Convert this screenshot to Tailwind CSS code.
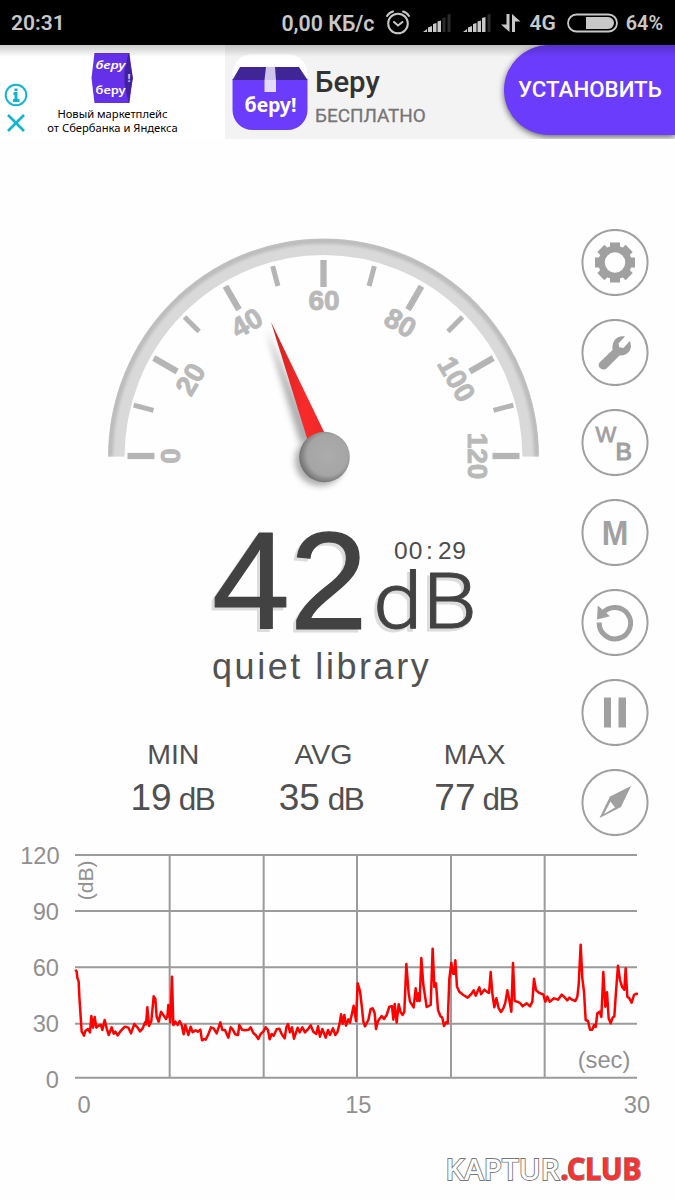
<!DOCTYPE html>
<html lang="ru">
<head>
  <meta charset="UTF-8">
  <meta name="viewport" content="width=device-width, initial-scale=1.0">
  <title>Sound Meter</title>
  <script src="https://cdn.jsdelivr.net/npm/@tailwindcss/browser@4"></script>
</head>
<body class="w-[675px] h-[1200px] overflow-hidden bg-[#fefefe] flex flex-col font-['Liberation_Sans',sans-serif]">

  <!-- Status bar -->
  <header class="h-[45px] shrink-0 bg-black text-[#c8c8c8] flex items-center pl-[11px] pr-3 font-['Roboto',sans-serif] font-semibold text-[21px]">
    <span class="mr-auto pt-[2px]">20:31</span>
    <span class="mr-[11px] pt-[2px] text-[21.3px]">0,00 КБ/с</span>
    <svg class="w-[26px] h-[26px] mr-[12px]" viewBox="0 0 26 26" fill="none" stroke="#c8c8c8" stroke-width="2" stroke-linecap="round">
      <circle cx="13" cy="13.500" r="9.8"/>
      <path d="M9 12l4 3.500 4.500-3.500M2 6Q4 2.500 8 1.500M24 6Q22 2.500 18 1.500"/>
    </svg>
    <svg class="w-[28px] h-[20px] mr-[12px]" viewBox="0 0 28 20" fill="#c8c8c8">
      <path d="M0 19l4-3v3zM5 14.500l4-1.500v6H5zM10 11l3.500-1v9H10zM14.500 8.500l3.500-1V19h-3.500z"/>
      <path d="M19.500 5l3-1v15h-3zM24.500 2l3-1.500V19h-3z" fill="#2c2c2c"/>
    </svg>
    <svg class="w-[28px] h-[20px] mr-[10px]" viewBox="0 0 28 20" fill="#c8c8c8">
      <path d="M0 19l4-3v3zM5 14.500l4-1.500v6H5zM10 11l3.500-1v9H10zM14.500 8.500l3.500-1V19h-3.500zM19 5l3.500-1v15H19z"/>
      <path d="M24.500 2l3-1.500V19h-3z" fill="#2c2c2c"/>
    </svg>
    <svg class="w-[20px] h-[20px] mr-[8px]" viewBox="0 0 20 20" fill="#c8c8c8">
      <path d="M5.500 1h3v18L0 11.500h5.500zM11 19V1l8.500 7.500H14V19z"/>
    </svg>
    <span class="mr-[11px] pt-[2px]">4G</span>
    <svg class="w-[51px] h-[20px] mr-2" viewBox="0 0 51 20">
      <rect x="1" y="1.500" width="49" height="17" rx="8.500" fill="none" stroke="#c8c8c8" stroke-width="1.800"/>
      <path d="M19 4h22a6 6 0 0 1 0 12H19z" fill="#c8c8c8"/>
    </svg>
    <span class="pt-[2px] text-[19.8px]">64%</span>
  </header>

  <!-- Ad banner -->
  <section class="relative h-[94px] shrink-0 flex">
    <div class="w-[225px] h-full bg-white flex">
      <div class="w-[36px] pt-[38px] pl-1 flex flex-col gap-[6px]">
        <svg class="w-[24px] h-[24px]" viewBox="0 0 24 24" fill="none" stroke="#12b5d0" stroke-width="2">
          <circle cx="12" cy="12" r="10.300"/>
          <path d="M9.500 10.500H12V17M9 17.500h6.500M12 5.500v2.500" stroke-width="3"/>
        </svg>
        <svg class="w-[24px] h-[20px]" viewBox="0 0 24 20" stroke="#12b5d0" stroke-width="2.600">
          <path d="M4 2l16 16M20 2L4 18"/>
        </svg>
      </div>
      <div class="w-[153px] pt-[7px] flex flex-col items-center">
        <svg class="w-[44px] h-[52px]" viewBox="1.500 0 44 52">
          <path d="M5 1h35l3 25-3 25H5L2 26z" fill="#6430e8"/>
          <path d="M39 1l4.500 25L39 51l-4-20V20z" fill="#42219c"/>
          <text x="21" y="17" text-anchor="middle" textLength="30" lengthAdjust="spacingAndGlyphs" font-family="Noto Sans" font-weight="600" font-style="italic" font-size="10" fill="#fff">беру</text>
          <text x="21" y="42" text-anchor="middle" textLength="30" lengthAdjust="spacingAndGlyphs" font-family="Noto Sans" font-weight="600" font-size="10" fill="#fff">беру</text>
          <text x="38" y="30" font-family="Noto Sans" font-weight="700" font-size="11" fill="#d8ccf8">!</text>
        </svg>
        <p class="mt-[3px] font-['Noto_Sans',sans-serif] text-[11.2px] leading-[13.5px] text-center text-black whitespace-nowrap">Новый маркетплейс<br>от Сбербанка и Яндекса</p>
      </div>
    </div>
    <div class="flex-1 bg-[#f3f3f3] flex overflow-hidden font-['Roboto',sans-serif]">
      <svg class="w-[76px] h-[76px] mt-[9px] ml-[7px]" viewBox="0 0 76 76">
        <rect x=".5" width="75" height="75" rx="20" fill="#fff"/>
        <path d="M.5 25h75v31a20 20 0 0 1-20 20h-35a20 20 0 0 1-20-20z" fill="#6b3cfb"/>
        <path d="M8 13h59l8.500 13H.5z" fill="#3f2596"/>
        <path d="M34 13h9l1 13H32.500z" fill="#cfc4ec"/>
        <path d="M32.500 26H44v12H32.500z" fill="#e4dcff"/>
        <text x="38.500" y="58" text-anchor="middle" textLength="52" lengthAdjust="spacingAndGlyphs" font-family="Noto Sans" font-weight="700" font-size="19" fill="#fff">беру!</text>
      </svg>
      <div class="ml-[7px] pt-[20px] w-[189px]">
        <p class="text-[29.3px] leading-[34px] font-medium text-[#333]">Беру</p>
        <p class="text-[18.9px] leading-[33px] text-[#757575] [-webkit-text-stroke:0.3px_#757575]">БЕСПЛАТНО</p>
      </div>
      <div class="w-[171px] h-[90px] rounded-l-full bg-[#6b3cfb] shadow-[0_2px_6px_rgba(0,0,0,.6)] pl-[14px] flex items-center text-white text-[22.3px] font-medium">УСТАНОВИТЬ</div>
    </div>
    <div class="absolute inset-x-0 top-0 h-[12px] bg-linear-to-b from-black/20 to-transparent"></div>
  </section>

  <main class="flex h-[701px] shrink-0">
    <div class="w-[570px]">
      <!-- Gauge, origin at the centre of the arc -->
      <svg class="block w-[570px] h-[356px]" viewBox="-323.500 -317 570 356" font-family="Liberation Sans, sans-serif">
        <defs>
          <linearGradient id="needle" x1="0" y1="0" x2="1" y2="0">
            <stop offset="0" stop-color="#cf2020"/>
            <stop offset=".6" stop-color="#f82a2a"/>
            <stop offset="1" stop-color="#ee2828"/>
          </linearGradient>
          <radialGradient id="hub" cx=".56" cy=".46" r=".56">
            <stop offset="0" stop-color="#acacac"/>
            <stop offset=".72" stop-color="#a5a5a5"/>
            <stop offset="1" stop-color="#727272"/>
          </radialGradient>
          <filter id="soft" x="-50%" y="-50%" width="200%" height="200%"><feGaussianBlur stdDeviation="3"/></filter>
          <filter id="edge" x="-10%" y="-10%" width="120%" height="120%"><feGaussianBlur stdDeviation="1.500"/></filter>
          <clipPath id="ring"><path d="M-215.500.7A215.500 218.300 0 0 1 215.500.7z"/></clipPath>
        </defs>
        <g fill="none" clip-path="url(#ring)">
          <path d="M-207.200.7A207.200 210 0 0 1 207.200.7" stroke="#d9d9d9" stroke-width="16.600"/>
          <path d="M-213.500.7A213.500 216 0 0 1 213.500.7" stroke="#bcbcbc" stroke-width="6" filter="url(#edge)"/>
        </g>
        <g id="ticks" stroke="#b5b5b5"></g>
        <g fill="#b9b9b9" stroke="#b9b9b9" stroke-width=".9" font-weight="700" font-size="28" text-anchor="middle">
          <text y="-144" transform="rotate(-90)">0</text>
          <text y="-144" transform="rotate(-60)">20</text>
          <text y="-144" transform="rotate(-30)">40</text>
          <text x=".5" y="-146">60</text>
          <text y="-144" transform="rotate(30)">80</text>
          <text y="-144" transform="rotate(60)">100</text>
          <text y="-144" transform="rotate(90)">120</text>
        </g>
        <path d="M-57-126L-24-14-8-14z" fill="#777" opacity=".6" filter="url(#soft)"/>
        <circle cx="-3.500" cy="5" r="25" fill="#777" opacity=".6" filter="url(#soft)"/>
        <path d="M-52.500-134L-15-13 3-19z" fill="url(#needle)"/>
        <circle cx="1" cy="1" r="25.300" fill="url(#hub)"/>
      </svg>

      <!-- Current level -->
      <svg class="block w-[570px] h-[205px]" viewBox="0 495 570 205" font-family="Liberation Sans, sans-serif" fill="#424242">
        <g class="drop-shadow-[-3px_3px_0_#dcdcdc]" stroke="#424242" stroke-linejoin="round">
          <text x="212" y="628.500" font-size="140" stroke-width="1.200" letter-spacing="0">42</text>
          <text x="373" y="628" font-size="78" font-family="Roboto" font-weight="300" stroke-width=".8" textLength="104" lengthAdjust="spacingAndGlyphs">dB</text>
        </g>
        <g font-size="24.500" fill="#4c4c4c">
          <text x="394" y="559" letter-spacing="1">00</text>
          <text x="426" y="559">:</text>
          <text x="438" y="559" letter-spacing=".5">29</text>
        </g>
        <text x="212" y="679" font-size="36" fill="#525252" letter-spacing="2.550">quiet library</text>
      </svg>

      <!-- Min / avg / max -->
      <div class="ml-[98px] w-[452px] mt-[36px] grid grid-cols-3 text-center text-[#505050]">
        <div>
          <p class="text-[28.5px] leading-[36px]">MIN</p>
          <p class="text-[37px] leading-[51px] pr-[2px]">19<span class="ml-[7px] text-[31.5px] tracking-[-1.5px]">dB</span></p>
        </div>
        <div class="pr-[1px]">
          <p class="text-[28.5px] leading-[36px]">AVG</p>
          <p class="pr-[5px] text-[37px] leading-[51px]">35<span class="ml-[8px] text-[31.5px] tracking-[-1.5px]">dB</span></p>
        </div>
        <div>
          <p class="text-[28.5px] leading-[36px]">MAX</p>
          <p class="pl-[3px] text-[37px] leading-[51px]">77<span class="ml-[7px] text-[31.5px] tracking-[-1.5px]">dB</span></p>
        </div>
      </div>
    </div>

    <!-- Side buttons -->
    <nav class="pt-[90px] pl-[11px] flex flex-col gap-[23px]">
      <button class="block w-[68px] h-[67px]">
        <svg viewBox="0 0 68 67" fill="#a0a0a0">
          <circle cx="34" cy="33.500" r="32.600" fill="none" stroke="#a0a0a0" stroke-width="2"/>
          <circle cx="34" cy="33.500" r="13.500" fill="none" stroke="#a0a0a0" stroke-width="6.500"/>
          <g id="teeth"></g>
        </svg>
      </button>
      <button class="block w-[68px] h-[67px]">
        <svg viewBox="-.5 0 68 67" fill="#a0a0a0">
          <circle cx="33.500" cy="33.500" r="32.600" fill="none" stroke="#a0a0a0" stroke-width="2"/>
          <path d="M18 43.500L31 31C30 22 35.500 16 43.500 17.500L37 24.500 37.800 28.200 42 29 48.200 22C52 29.500 47 37 38 36.500L25 49.500C20.500 52.500 15 47.500 18 43.500z"/>
        </svg>
      </button>
      <button class="block w-[68px] h-[67px]">
        <svg viewBox="-.5 0 68 67" fill="#a0a0a0" font-family="Liberation Sans, sans-serif">
          <circle cx="33.500" cy="33.500" r="32.600" fill="none" stroke="#a0a0a0" stroke-width="2"/>
          <text x="14" y="33" font-size="22" stroke="#a0a0a0" stroke-width=".8">W</text>
          <text x="34" y="51" font-size="24.500" stroke="#a0a0a0" stroke-width="1.200">B</text>
        </svg>
      </button>
      <button class="block w-[68px] h-[67px]">
        <svg viewBox="-.5 0 68 67" fill="#a0a0a0" font-family="Liberation Sans, sans-serif">
          <circle cx="33.500" cy="33.500" r="32.600" fill="none" stroke="#a0a0a0" stroke-width="2"/>
          <g transform="translate(33.500 46) scale(.9 1)">
            <text text-anchor="middle" font-size="35.500" font-weight="700">M</text>
          </g>
        </svg>
      </button>
      <button class="block w-[68px] h-[67px]">
        <svg viewBox="-.5 0 68 67" fill="#a0a0a0">
          <circle cx="33.500" cy="33.500" r="32.600" fill="none" stroke="#a0a0a0" stroke-width="2"/>
          <path d="M21 24.500A15.700 15.700 0 1 1 17.700 33.500" fill="none" stroke="#a0a0a0" stroke-width="5"/>
          <path d="M16.300 16.500L15.500 30.500 28.500 27.300z"/>
        </svg>
      </button>
      <button class="block w-[68px] h-[67px]">
        <svg viewBox="-.5 0 68 67" fill="#a0a0a0">
          <circle cx="33.500" cy="33.500" r="32.600" fill="none" stroke="#a0a0a0" stroke-width="2"/>
          <path d="M22.500 18.500h7v30h-7zM37 18.500h7.500v30H37z"/>
        </svg>
      </button>
      <button class="block w-[68px] h-[67px]">
        <svg viewBox="-.5 0 68 67" fill="#a0a0a0">
          <circle cx="33.500" cy="33.500" r="32.600" fill="none" stroke="#a0a0a0" stroke-width="2"/>
          <path fill-rule="evenodd" d="M49.500 17L39.500 38 18 49 28.500 27.500zM29 32.500L22.500 45 33.500 38.500z"/>
        </svg>
      </button>
    </nav>
  </main>

  <!-- Level history, 3 units per pixel -->
  <svg class="block w-[675px] h-[290px] shrink-0" viewBox="-30 15 2025 870" font-family="Liberation Sans, sans-serif" font-size="71" fill="#909090">
    <path d="M195 60H1881M195 228H1881M195 397H1881M195 566H1881M195 728H1881M479 60V728M761 60V728M1041 60V728M1323 60V728M1604 60V728" fill="none" stroke="#9b9b9b" stroke-width="6"/>
    <g text-anchor="end">
      <text x="149" y="88">120</text>
      <text x="147" y="255">90</text>
      <text x="147" y="422">60</text>
      <text x="147" y="592">30</text>
      <text x="147" y="758">0</text>
    </g>
    <g text-anchor="middle">
      <text x="222" y="834">0</text>
      <text x="1045" y="834">15</text>
      <text x="1881" y="834">30</text>
    </g>
    <text x="1703" y="698" font-size="71" textLength="158">(sec)</text>
    <text transform="translate(249 196) rotate(-90)" font-size="62" textLength="120" lengthAdjust="spacingAndGlyphs">(dB)</text>
    <polyline fill="none" stroke="#f00" stroke-width="7.500" stroke-linejoin="round" points="
      196,404 200,410 202,428 206,440 208,485 211,530 215,590 219,596 222,602 226,588 234,582 240,592 244,543 249,578 254,546 259,578
      265,572 273,570 277,585 284,555 290,580 296,600 305,577 311,596 316,590 323,601 332,588 345,575 355,578 363,595 373,567 383,578
      390,589 398,580 405,562 408,568 412,517 417,573 424,558 431,484 436,492 440,545 446,560 453,530 460,540 468,552 472,545 475,510
      481,562 486,425 490,570 496,560 503,570 509,558 515,570 521,598 526,570 535,600 542,575 548,592 557,586 563,590 571,584 576,616
      583,612 587,614 594,600 603,577 611,580 620,595 631,562 637,585 645,585 655,608 662,577 668,583 676,598 684,600 688,570 696,584
      706,586 716,584 722,577 730,594 737,600 745,612 752,597 760,590 767,577 774,585 779,613 785,597 791,602 800,583 808,581 815,597
      824,610 829,577 834,567 840,592 846,577 852,611 863,578 869,592 877,577 885,592 893,584 902,571 910,590 919,597 924,574 930,605
      937,582 947,608 954,585 960,600 969,580 976,600 982,592 989,565 993,538 998,566 1003,540 1008,572 1015,553 1020,563 1031,512
      1038,558 1043,445 1050,468 1056,520 1060,560 1065,574 1075,555 1082,522 1088,520 1094,535 1098,582 1104,558 1115,543 1122,552
      1130,540 1138,515 1146,514 1150,554 1154,507 1160,563 1166,508 1172,532 1178,540 1183,530 1189,387 1196,475 1200,500 1211,517
      1217,460 1222,498 1226,475 1229,498 1234,369 1240,450 1250,516 1262,510 1268,341 1273,455 1278,445 1284,525 1291,543 1297,548
      1302,573 1308,562 1313,565 1318,432 1324,383 1329,416 1333,416 1336,376 1341,455 1348,470 1360,480 1373,488 1384,477 1391,466
      1397,482 1408,457 1413,478 1423,464 1430,470 1437,474 1442,411 1447,475 1453,517 1459,490 1466,520 1473,531 1480,520 1486,503
      1492,466 1497,490 1504,530 1509,384 1514,498 1522,500 1530,504 1538,514 1550,505 1560,514 1567,500 1572,431 1578,466 1588,474
      1600,478 1606,500 1612,485 1619,500 1632,490 1644,494 1655,479 1663,486 1672,496 1678,488 1686,494 1696,498 1702,485 1706,450
      1712,329 1717,430 1722,470 1727,555 1734,558 1740,584 1747,584 1752,570 1757,576 1762,535 1769,530 1774,546 1780,411 1786,515
      1791,472 1796,550 1802,565 1808,548 1813,544 1818,470 1824,392 1830,435 1836,455 1843,464 1847,400 1852,485 1858,490 1865,503
      1872,480 1878,476 1884,477"/>
  </svg>

  <footer class="flex justify-end pr-[27px] pt-[18px]">
    <svg class="w-[206px] h-[40px]" viewBox="0 0 206 40" font-family="Noto Sans, sans-serif" font-size="29.500" stroke="#777" paint-order="stroke">
      <text x="3.500" y="31.800" textLength="114" lengthAdjust="spacingAndGlyphs" font-weight="500" fill="#fff" stroke-width="1.800">KAPTUR</text>
      <text x="118.500" y="31.800" textLength="81" font-weight="700" fill="#fb3232" stroke-width="1.500" lengthAdjust="spacingAndGlyphs">.CLUB</text>
    </svg>
  </footer>

  <script>
    const ticks = document.getElementById("ticks");
    // one tick every 15 degrees, long ones at the labelled values
    for (let a = -90; a <= 90; a += 15) {
      const major = a % 30 === 0;
      const start = major ? -196 : -196.5;
      const end = major ? -169 : -176;
      ticks.innerHTML += `<path d="M0 ${start}V${end}" stroke-width="${major ? 6.3 : 5}" transform="rotate(${a})"/>`;
    }

    const teeth = document.getElementById("teeth");
    for (let a = 0; a < 360; a += 45) {
      teeth.innerHTML += `<path d="M29 13.500h10v5h-10z" transform="rotate(${a} 34 33.500)"/>`;
    }
  </script>
</body>
</html>
